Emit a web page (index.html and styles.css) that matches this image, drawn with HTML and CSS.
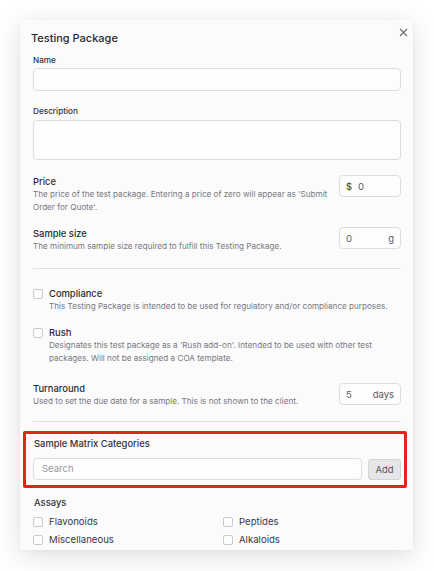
FILE: index.html
```html
<!DOCTYPE html>
<html>
<head>
<meta charset="utf-8">
<link rel="stylesheet" href="styles.css">
</head>
<body>
<div class="card">
  <button class="close" aria-label="Close">
    <svg width="9" height="9" viewBox="0 0 9 9"><path d="M1 1L8 8M8 1L1 8" stroke="#6b6b70" stroke-width="1.1" fill="none"/></svg>
  </button>
  <h1 class="title">Testing Package</h1>

  <div class="field field-name">
    <div class="small-label">Name</div>
    <div class="input input-name"></div>
  </div>

  <div class="field field-desc">
    <div class="small-label">Description</div>
    <div class="input textarea"></div>
  </div>

  <div class="row row-price">
    <div class="text">
      <div class="label">Price</div>
      <div class="desc">The price of the test package. Entering a price of zero will appear as 'Submit Order for Quote'.</div>
    </div>
    <div class="input small-input"><span class="prefix">$</span><span class="val">0</span></div>
  </div>

  <div class="row row-sample">
    <div class="text">
      <div class="label">Sample size</div>
      <div class="desc">The minimum sample size required to fulfill this Testing Package.</div>
    </div>
    <div class="input small-input spread"><span class="val">0</span><span class="unit">g</span></div>
  </div>

  <hr class="divider div1">

  <div class="check-row row-compliance">
    <span class="box"></span>
    <div class="text">
      <div class="label">Compliance</div>
      <div class="desc">This Testing Package is intended to be used for regulatory and/or compliance purposes.</div>
    </div>
  </div>

  <div class="check-row row-rush">
    <span class="box"></span>
    <div class="text">
      <div class="label">Rush</div>
      <div class="desc">Designates this test package as a 'Rush add-on'. Intended to be used with other test packages. Will not be assigned a COA template.</div>
    </div>
  </div>

  <div class="row row-turn">
    <div class="text">
      <div class="label">Turnaround</div>
      <div class="desc">Used to set the due date for a sample. This is not shown to the client.</div>
    </div>
    <div class="input small-input spread"><span class="val">5</span><span class="unit">days</span></div>
  </div>

  <hr class="divider div2">

  <div class="highlight">
    <div class="small-label big">Sample Matrix Categories</div>
    <div class="search-row">
      <div class="input search"><span class="placeholder">Search</span></div>
      <button class="add">Add</button>
    </div>
  </div>

  <div class="small-label big assays-label">Assays</div>
  <div class="assays">
    <label class="assay"><span class="box"></span>Flavonoids</label>
    <label class="assay"><span class="box"></span>Peptides</label>
    <label class="assay"><span class="box"></span>Miscellaneous</label>
    <label class="assay"><span class="box"></span>Alkaloids</label>
  </div>
</div>
</body>
</html>
```

FILE: styles.css
```css
* { box-sizing: border-box; }
html, body { margin: 0; padding: 0; background: #ffffff; }
body {
  font-family: Inter, "Noto Sans", "Liberation Sans", sans-serif;
  color: #2b2b30;
  width: 434px;
  height: 571px;
  overflow: hidden;
}
.card {
  position: relative;
  margin: 20px 0 0 20px;
  width: 393px;
  height: 530px;
  overflow: hidden;
  background: #fbfbfc;
  box-shadow: 0 6px 26px rgba(0, 0, 0, 0.13), 0 1px 4px rgba(0,0,0,0.04);
  padding: 0 12px 0 13px;
}
.close {
  position: absolute;
  top: 7px;
  right: 4px;
  width: 11px;
  height: 11px;
  padding: 1px;
  border: 0;
  background: none;
  display: flex;
}
.title {
  margin: 0 0 0 -2px;
  padding-top: 10px;
  font-size: 11px;
  line-height: 16px;
  font-weight: 500;
  color: #2a2a2e;
}
.small-label {
  font-size: 8.2px;
  line-height: 12px;
  font-weight: 500;
  color: #333338;
}
.small-label.big { font-size: 9.4px; margin-left: 1px; }
.input {
  border: 1px solid #dcdce3;
  border-radius: 4px;
  background: #fdfdfe;
}
.field-name { margin-top: 8px; }
.field-name .small-label { margin-bottom: 2px; }
.input-name { height: 23px; }
.field-desc { margin-top: 14px; }
.field-desc .small-label { margin-bottom: 3px; }
.textarea { height: 40px; }

.row {
  display: flex;
  align-items: flex-start;
  justify-content: space-between;
  gap: 8px;
}
.row .text { padding-top: 1px; flex: 1; }
.label {
  font-size: 9.4px;
  line-height: 12px;
  font-weight: 500;
  color: #2b2b30;
}
.desc {
  font-size: 8.15px;
  line-height: 12.5px;
  color: #77777d;
}
.small-input {
  flex: none;
  width: 62px;
  height: 22px;
  display: flex;
  align-items: center;
  padding: 0 6px;
  font-size: 9.5px;
  color: #5a5a60;
}
.small-input .prefix { color: #333; margin-right: 6px; }
.spread { justify-content: space-between; padding: 0 6px 0 6px; }
.row-price { margin-top: 15px; }
.row-sample { margin-top: 14px; }
.row-turn { margin-top: 19px; }
.row-turn .text { padding-top: 0; }

.divider {
  border: 0;
  border-top: 1px solid #dedee3;
  margin: 0;
}
.div1 { margin-top: 15px; }
.div2 { margin-top: 13px; }

.box {
  flex: none;
  width: 10px;
  height: 10px;
  border: 1px solid #c9c9cf;
  border-radius: 2px;
  background: #fdfdfe;
}
.check-row {
  display: flex;
  align-items: flex-start;
  gap: 6px;
}
.check-row .box { margin-top: 1px; }
.row-compliance { margin-top: 19px; }
.row-rush { margin-top: 15px; }

.highlight {
  margin: 9px -6px 0 -10px;
  border: 3px solid #e0261b;
  border-radius: 2px;
  padding: 4px 3px 5px 7px;
}
.search-row {
  display: flex;
  gap: 6px;
  margin-top: 8px;
}
.search {
  flex: 1;
  height: 22px;
  display: flex;
  align-items: center;
  padding-left: 8px;
}
.placeholder { font-size: 9.5px; color: #9a9aa0; }
.add {
  width: 33px;
  height: 21px;
  margin-top: 1px;
  border: 1px solid #d3d3d8;
  border-radius: 3px;
  background: #e6e6e9;
  font-family: inherit;
  font-size: 9.5px;
  color: #56565c;
  padding: 0;
}
.assays-label { margin-top: 9px; }
.assays {
  display: grid;
  grid-template-columns: 1fr 1fr;
  column-gap: 12px;
  margin-top: 4px;
}
.assay {
  display: flex;
  align-items: center;
  gap: 6px;
  height: 18px;
  font-size: 9.6px;
  color: #3a3a40;
}
```
